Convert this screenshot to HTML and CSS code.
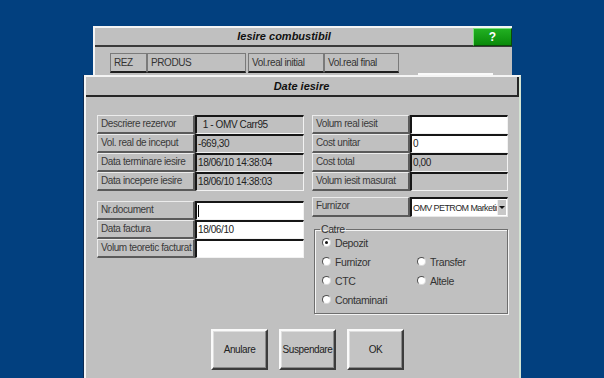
FILE: index.html
```html
<!DOCTYPE html>
<html lang="ro">
<head>
    <meta charset="UTF-8">
    <title>Date iesire</title>
    <link rel="stylesheet" href="styles.css">
</head>
<body>
  <!-- Window behind: list of tank outputs -->
  <section class="window back">
    <div class="titlebar">
      <h1>Iesire combustibil</h1>
      <button class="help">?</button>
    </div>
    <div class="cols">
      <div class="col c-rez">REZ</div>
      <div class="col c-prod">PRODUS</div>
      <div class="col c-init">Vol.real initial</div>
      <div class="col c-final">Vol.real final</div>
    </div>
    <div class="back-input"></div>
  </section>

  <!-- Modal dialog -->
  <section class="window dialog">
    <div class="dlg-title">Date iesire</div>

    <div class="form">
      <div class="left">
        <div class="fields">
          <div class="row"><span class="lbl">Descriere rezervor</span><span class="val ro">&nbsp;&nbsp;1 - OMV Carr95</span></div>
          <div class="row"><span class="lbl">Vol. real de inceput</span><span class="val ro">-669,30</span></div>
          <div class="row"><span class="lbl">Data terminare iesire</span><span class="val ro">18/06/10 14:38:04</span></div>
          <div class="row"><span class="lbl">Data incepere iesire</span><span class="val ro">18/06/10 14:38:03</span></div>
        </div>
        <div class="fields second">
          <div class="row"><span class="lbl">Nr.document</span><span class="val"><i class="caret"></i></span></div>
          <div class="row"><span class="lbl">Data factura</span><span class="val">18/06/10</span></div>
          <div class="row"><span class="lbl">Volum teoretic facturat</span><span class="val"></span></div>
        </div>
      </div>

      <div class="right">
        <div class="fields">
          <div class="row"><span class="lbl">Volum real iesit</span><span class="val"></span></div>
          <div class="row"><span class="lbl">Cost unitar</span><span class="val">0</span></div>
          <div class="row"><span class="lbl">Cost total</span><span class="val ro">0,00</span></div>
          <div class="row"><span class="lbl">Volum iesit masurat</span><span class="val ro"></span></div>
        </div>
        <div class="row furnizor">
          <span class="lbl">Furnizor</span>
          <span class="combo"><span class="combo-text">OMV PETROM Marketing</span><span class="arrow"></span></span>
        </div>
        <fieldset class="catre">
          <legend>Catre</legend>
          <div class="radios">
            <label><input type="radio" name="catre" checked> Depozit</label>
            <span></span>
            <label><input type="radio" name="catre"> Furnizor</label>
            <label><input type="radio" name="catre"> Transfer</label>
            <label><input type="radio" name="catre"> CTC</label>
            <label><input type="radio" name="catre"> Altele</label>
            <label><input type="radio" name="catre"> Contaminari</label>
          </div>
        </fieldset>
      </div>
    </div>

    <div class="buttons">
      <button class="btn">Anulare</button>
      <button class="btn">Suspendare</button>
      <button class="btn">OK</button>
    </div>
  </section>
</body>
</html>
```

FILE: styles.css
```css
/* Desktop */
body {
  margin: 0;
  width: 604px;
  height: 378px;
  overflow: hidden;
  position: relative;
  background: #02407f;
  font-family: "Liberation Sans", Arial, sans-serif;
  font-size: 10px;
  letter-spacing: -0.4px;
  color: #2a2a2a;
}

.window {
  position: absolute;
  box-sizing: border-box;
  background: #c0c0c0;
}

/* Back window */
.back {
  left: 93px;
  top: 26px;
  width: 419px;
  height: 70px;
  border-top: 2px solid #f4f4f4;
  border-left: 2px solid #f4f4f4;
}

.titlebar {
  display: flex;
  height: 17px;
  border-bottom: 2px solid #3a3a3a;
}

.titlebar h1 {
  flex: 1;
  margin: 0;
  font-size: 11px;
  font-style: italic;
  font-weight: bold;
  letter-spacing: 0;
  text-align: center;
  line-height: 17px;
  color: #111;
}

.help {
  width: 39px;
  height: 18px;
  padding: 0;
  border: 1px solid;
  border-color: #7ee07e #0a4a0a #0a4a0a #7ee07e;
  background: linear-gradient(#22b022, #0a8a0a);
  color: #fff;
  font-family: "Liberation Sans", Arial, sans-serif;
  font-weight: bold;
  font-size: 12px;
}

.cols {
  display: flex;
  margin: 6px 0 0 15px;
}

.col {
  box-sizing: border-box;
  height: 20px;
  padding-left: 3px;
  line-height: 18px;
  color: #333;
  border: 1px solid #7a7a7a;
  border-bottom: 2px solid #1e1e1e;
}

.c-rez { width: 37px; }
.c-prod { width: 99px; margin-right: 2px; }
.c-init { width: 76px; }
.c-final { width: 75px; }

.back-input {
  width: 75px;
  height: 10px;
  margin-left: 323px;
  background: #fafafa;
}

/* Dialog */
.dialog {
  left: 84px;
  top: 75px;
  width: 437px;
  height: 320px;
  border-top: 2px solid #f4f4f4;
  border-left: 2px solid #f4f4f4;
  border-right: 2px solid #d4e4d4;
  box-shadow: -1px 0 0 #0b2a52;
}

.dlg-title {
  height: 18px;
  border-bottom: 2px solid #262626;
  border-right: 2px solid #262626;
  text-align: center;
  line-height: 19px;
  font-size: 11px;
  font-style: italic;
  font-weight: bold;
  letter-spacing: 0;
  color: #111;
}

.form {
  display: grid;
  grid-template-columns: 207px 196px;
  column-gap: 8px;
  align-items: start;
  margin: 18px 0 0 11px;
}

.fields.second {
  margin-top: 10px;
}

.row {
  display: grid;
  grid-template-columns: 98px 1fr;
  height: 19px;
}

.lbl, .val, .combo {
  box-sizing: border-box;
  overflow: hidden;
  white-space: nowrap;
}

.lbl {
  padding-left: 3px;
  line-height: 16px;
  color: #3a3a3a;
  border-top: 1px solid #ececec;
  border-left: 1px solid #ececec;
  border-bottom: 2px solid #5a5a5a;
  border-right: 2px solid #5a5a5a;
}

.val {
  padding-left: 1px;
  line-height: 16px;
  background: #fff;
  color: #222;
  border-top: 2px solid #161616;
  border-left: 2px solid #161616;
  border-bottom: 1px solid #f2f2f2;
  border-right: 1px solid #f2f2f2;
}

.val.ro {
  background: #c0c0c0;
}

.caret {
  display: inline-block;
  width: 1px;
  height: 12px;
  margin-top: 2px;
  background: #000;
  vertical-align: top;
}

/* Supplier combo */
.furnizor {
  height: 20px;
  margin-top: 6px;
}

.combo {
  display: flex;
  align-items: center;
  background: #fff;
  border-top: 2px solid #161616;
  border-left: 2px solid #161616;
  border-right: 1px solid #e8e8e8;
  border-bottom: 1px solid #e8e8e8;
  font-size: 9px;
  letter-spacing: -0.6px;
}

.combo-text {
  flex: 1;
  overflow: hidden;
  padding-left: 1px;
}

.arrow {
  position: relative;
  width: 8px;
  height: 15px;
  margin-right: 1px;
  background: #c8c8c8;
  border-left: 1px solid #eee;
}

.arrow::after {
  content: "";
  position: absolute;
  left: 1px;
  top: 6px;
  border: 3px solid transparent;
  border-top: 3px solid #111;
}

/* Catre group */
.catre {
  margin: 6px 0 0 2px;
  padding: 0 0 0 7px;
  height: 91px;
  box-sizing: border-box;
  border: 1px solid #6e6e6e;
  box-shadow: inset 1px 1px 0 #f4f4f4, 1px 1px 0 #f4f4f4;
}

.catre legend {
  padding: 0 1px;
  margin-left: -2px;
  font-size: 10.5px;
  color: #333;
}

.radios {
  display: grid;
  grid-template-columns: 95px 1fr;
  grid-auto-rows: 19px;
  margin-top: -2px;
}

.radios label {
  display: flex;
  align-items: center;
  gap: 4px;
  height: 19px;
  font-size: 10.5px;
  color: #333;
}

.radios input {
  appearance: none;
  -webkit-appearance: none;
  position: relative;
  width: 9px;
  height: 9px;
  margin: 0;
  border-radius: 50%;
  background: #fff;
  border: 1px solid;
  border-color: #505050 #d8d8d8 #d8d8d8 #505050;
}

.radios input:checked::after {
  content: "";
  position: absolute;
  left: 2px;
  top: 2px;
  width: 3px;
  height: 3px;
  border-radius: 50%;
  background: #111;
}

/* Buttons */
.buttons {
  display: flex;
  gap: 11px;
  margin: 15px 0 0 125px;
}

.btn {
  width: 57px;
  height: 41px;
  padding: 0;
  background: #c4c4c4;
  border: 2px solid;
  border-color: #fafafa #3c3c3c #3c3c3c #fafafa;
  box-shadow: inset -1px -1px 0 #8a8a8a, inset 1px 1px 0 #dedede;
  font-family: "Liberation Sans", Arial, sans-serif;
  font-size: 10px;
  letter-spacing: -0.4px;
  color: #222;
}
```
